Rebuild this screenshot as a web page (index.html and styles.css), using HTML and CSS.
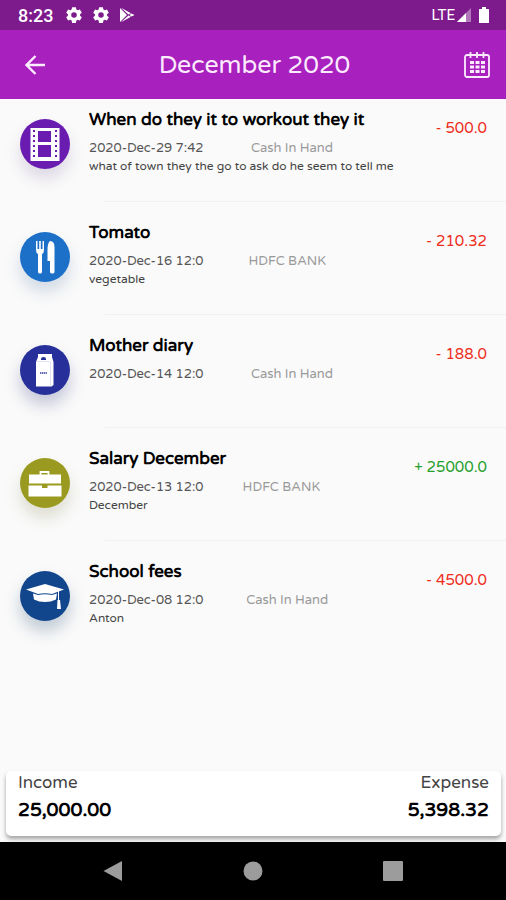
FILE: index.html
```html
<!DOCTYPE html>
<html lang="en">
<head>
    <meta charset="UTF-8">
    <meta name="viewport" content="width=device-width, initial-scale=1.0">
    <title>December 2020</title>
    <link rel="stylesheet" href="styles.css">
</head>
<body>
    <div class="status-bar">
        <span class="time">8:23</span>
        <svg class="gear" viewBox="0 0 24 24" width="18" height="18"><path fill="#fff" fill-rule="evenodd" d="M9.500 1.500h5l.7 3.100 1.700 1 3-.9 2.500 4.300-2.300 2.100v1.800l2.300 2.100-2.500 4.300-3-.9-1.700 1-.7 3.100h-5l-.7-3.100-1.700-1-3 .9L1.600 15l2.300-2.100v-1.800L1.600 9l2.500-4.300 3 .9 1.700-1zM12 8.300a3.700 3.700 0 1 0 0 7.400 3.700 3.700 0 0 0 0-7.400z"/></svg>
        <svg class="gear" viewBox="0 0 24 24" width="18" height="18"><path fill="#fff" fill-rule="evenodd" d="M9.500 1.500h5l.7 3.100 1.700 1 3-.9 2.500 4.300-2.300 2.100v1.800l2.300 2.100-2.500 4.300-3-.9-1.700 1-.7 3.100h-5l-.7-3.100-1.700-1-3 .9L1.600 15l2.300-2.100v-1.800L1.600 9l2.500-4.300 3 .9 1.700-1zM12 8.300a3.700 3.700 0 1 0 0 7.400 3.700 3.700 0 0 0 0-7.400z"/></svg>
        <svg viewBox="0 0 16 16" width="16" height="16"><path fill="#fff" d="M1 1v14l7-7zM2 .7l10 5.600-2.600 1.200zM2 15.300l10-5.600-2.600-1.200zM12.600 6.600L15.500 8l-2.900 1.400L10.400 8z"/></svg>
        <span class="network">LTE</span>
        <svg viewBox="0 0 16 16" width="16" height="16"><path fill="#fff" fill-opacity=".4" d="M15 1v14H1z"/><path fill="#fff" d="M10 6v9H1z"/></svg>
        <svg class="battery" viewBox="0 0 12 18" width="12" height="18"><path fill="#fff" d="M4 1h4v2h2.500q.5 0 .5.500v13q0 .5-.5.500h-9q-.5 0-.5-.5v-13Q1 3 1.500 3H4z"/></svg>
    </div>

    <header class="app-bar">
        <button class="icon-button" aria-label="Back">
            <svg viewBox="0 0 22 22" width="22" height="22"><path d="M11.500 2L2.500 11l9 9M2.500 11H21" fill="none" stroke="#fceaff" stroke-width="2.400"/></svg>
        </button>
        <h1>December 2020</h1>
        <button class="icon-button" aria-label="Calendar">
            <svg viewBox="0 0 28 28" width="28" height="28">
                <rect x="2" y="4" width="24" height="22" rx="2" fill="none" stroke="#fceaff" stroke-width="1.800"/>
                <path d="M7.500 1v6M14 1v6M20.500 1v6" stroke="#fceaff" stroke-width="1.800"/>
                <path d="M7 11.500h4m1.500 0h4m1.500 0h4M7 16h4m1.500 0h4m1.500 0h4M7 20.500h4m1.500 0h4m1.500 0h4" stroke="#fceaff" stroke-width="3"/>
            </svg>
        </button>
    </header>

    <main>
        <ul class="transactions">
            <li class="transaction">
                <span class="category movie">
                    <svg viewBox="0 0 50 50" width="50" height="50">
                        <path fill="#fff" d="M10.500 9h29v33h-29z"/>
                        <path fill="#6a1cb0" d="M18 12h13v11H18zM18 26h13v12H18z"/>
                        <path d="M14 11v30M36 11v30" stroke="#6a1cb0" stroke-width="2" stroke-dasharray="2 3"/>
                    </svg>
                </span>
                <div class="details">
                    <h2>When do they it to workout they it</h2>
                    <p class="meta"><time>2020-Dec-29 7:42</time><span class="account">Cash In Hand</span></p>
                    <p class="note">what of town they the go to ask do he seem to tell me</p>
                </div>
                <span class="amount expense">- 500.0</span>
            </li>
            <li class="transaction">
                <span class="category food">
                    <svg viewBox="0 0 50 50" width="50" height="50">
                        <path fill="#fff" d="M16 9h1.500v8h1.700V9h1.600v8h1.700V9H24v9q0 3-2 4v18q0 1.500-2 1.500T18 40V22q-2-1-2-4z"/>
                        <path fill="#fff" d="M30 9q4.500 0 4.500 6v25q0 1.500-2.200 1.500T30 40V29h-2.500V18q0-7 2.500-9z"/>
                    </svg>
                </span>
                <div class="details">
                    <h2>Tomato</h2>
                    <p class="meta"><time>2020-Dec-16 12:0</time><span class="account">HDFC BANK</span></p>
                    <p class="note">vegetable</p>
                </div>
                <span class="amount expense">- 210.32</span>
            </li>
            <li class="transaction">
                <span class="category milk">
                    <svg viewBox="0 0 50 50" width="50" height="50">
                        <path fill="#fff" d="M18 9h14v3l1.500 5v23l-2 1.500H16V17l2-5z"/>
                        <path d="M17 16.500h13M30.500 17v24" fill="none" stroke="#d9dcf6" stroke-width=".8"/>
                        <path fill="#27309a" d="M21 14q0-2 2.500-2t2.500 2v1h-5z"/>
                        <path d="M20 28h7" stroke="#6a70b8" stroke-width="2" stroke-dasharray="1.500 .5"/>
                    </svg>
                </span>
                <div class="details">
                    <h2>Mother diary</h2>
                    <p class="meta"><time>2020-Dec-14 12:0</time><span class="account">Cash In Hand</span></p>
                </div>
                <span class="amount expense">- 188.0</span>
            </li>
            <li class="transaction">
                <span class="category salary">
                    <svg viewBox="0 0 50 50" width="50" height="50">
                        <path d="M20.500 17v-3h8v3" fill="none" stroke="#fff" stroke-width="1.800"/>
                        <path fill="#fff" d="M9 16.500h32v9H9zM8.500 27.500H22V30h5.500v-2.500h14v11h-33z"/>
                    </svg>
                </span>
                <div class="details">
                    <h2>Salary December</h2>
                    <p class="meta"><time>2020-Dec-13 12:0</time><span class="account">HDFC BANK</span></p>
                    <p class="note">December</p>
                </div>
                <span class="amount income">+ 25000.0</span>
            </li>
            <li class="transaction">
                <span class="category school">
                    <svg viewBox="0 0 50 50" width="50" height="50">
                        <path fill="#fff" d="M6 18.500L25 13l19 5.500L32 23q-7-1.500-14 0z"/>
                        <path fill="#fff" d="M13 22.500l5 1.500q7-1.500 14 0l5-1.500-1 6q-5 2.500-11 2.500t-11-2.500z"/>
                        <path d="M38.500 20v10" stroke="#fff"/>
                        <path fill="#fff" d="M37.500 29h2.500l1 9h-4z"/>
                    </svg>
                </span>
                <div class="details">
                    <h2>School fees</h2>
                    <p class="meta"><time>2020-Dec-08 12:0</time><span class="account">Cash In Hand</span></p>
                    <p class="note">Anton</p>
                </div>
                <span class="amount expense">- 4500.0</span>
            </li>
        </ul>
    </main>

    <section class="summary">
        <div>
            <p class="summary-label">Income</p>
            <p class="summary-value">25,000.00</p>
        </div>
        <div class="right">
            <p class="summary-label">Expense</p>
            <p class="summary-value">5,398.32</p>
        </div>
    </section>

    <nav class="nav-bar">
        <button aria-label="Back"><svg viewBox="0 0 22 22" width="22" height="22"><path fill="#9c9c9c" d="M1.500 11L20 1v20z"/></svg></button>
        <button aria-label="Home"><svg viewBox="0 0 22 22" width="22" height="22"><circle cx="11" cy="11" r="9.500" fill="#9c9c9c"/></svg></button>
        <button aria-label="Recent apps"><svg viewBox="0 0 22 22" width="22" height="22"><rect x="1" y="1" width="20" height="20" rx="1" fill="#9c9c9c"/></svg></button>
    </nav>
</body>
</html>
```

FILE: styles.css
```css
* {
    box-sizing: border-box;
}

body {
    font-family: 'Varela Round', 'Noto Sans', sans-serif;
    margin: 0;
    min-height: 100vh;
    display: flex;
    flex-direction: column;
    background-color: #fafafa;
    color: #000;
}

h1, h2, p, ul {
    margin: 0;
    padding: 0;
}

svg {
    display: block;
}

button {
    padding: 0;
    border: none;
    background: none;
    cursor: pointer;
}

.status-bar {
    display: flex;
    align-items: center;
    height: 30px;
    padding: 0 16px 0 18px;
    background-color: #7d1b8c;
    color: #fff;
    font-family: Roboto, sans-serif;
}

.time {
    margin-right: 12px;
    font-size: 18px;
    font-weight: 500;
}

.gear {
    margin-right: 9px;
}

.network {
    margin-left: auto;
    margin-right: 1px;
    font-size: 15px;
}

.battery {
    margin-left: 6px;
}

.app-bar {
    display: flex;
    align-items: center;
    justify-content: space-between;
    height: 69px;
    padding: 0 15px 0 24px;
    background-color: #a820be;
    color: #fceaff;
}

.app-bar h1 {
    font-size: 25px;
    font-weight: 400;
}

main {
    flex: 1;
}

.transactions {
    list-style: none;
}

.transaction {
    position: relative;
    display: flex;
    align-items: flex-start;
    min-height: 103px;
    margin-bottom: 10px;
    padding: 9px 19px 0 20px;
}

.transaction:not(:last-child)::after {
    content: "";
    position: absolute;
    left: 105px;
    right: 0;
    bottom: 0;
    height: 1px;
    background-color: #f0f0f0;
}

.category {
    width: 50px;
    height: 50px;
    margin: 11px 19px 0 0;
    border-radius: 50%;
}

.movie {
    background-color: #6a1cb0;
    box-shadow: 0 10px 16px rgba(60, 30, 110, 0.15);
}

.food {
    background-color: #1d70c8;
    box-shadow: 0 10px 16px rgba(29, 80, 140, 0.18);
}

.milk {
    background-color: #27309a;
    box-shadow: 0 10px 16px rgba(39, 48, 120, 0.25);
}

.salary {
    background-color: #9a9a20;
    box-shadow: 0 10px 16px rgba(110, 110, 50, 0.2);
}

.school {
    background-color: #11468c;
    box-shadow: 0 10px 16px rgba(17, 60, 100, 0.25);
}

.details {
    flex: 1;
}

.details h2 {
    margin-bottom: 7px;
    font-size: 17px;
    font-weight: 700;
    line-height: 24px;
}

.meta {
    display: flex;
    justify-content: space-between;
    padding-right: 55px;
    color: #555;
    font-size: 13px;
    line-height: 18px;
}

/* empty third item keeps the account between the date and the amount */
.meta::after {
    content: "";
}

.account {
    color: #999;
}

.note {
    color: #444;
    font-size: 12px;
    line-height: 18px;
}

.amount {
    margin-top: 10px;
    font-size: 15px;
    line-height: 20px;
}

.expense {
    color: #ee2c20;
}

.income {
    color: #26a02c;
}

.summary {
    display: flex;
    justify-content: space-between;
    margin: 0 5px 6px 6px;
    padding: 0 12px 10px;
    border-radius: 5px;
    background-color: #fff;
    box-shadow: 0 3px 4px rgba(0, 0, 0, 0.35);
}

.right {
    text-align: right;
}

.summary-label {
    color: #444;
    font-size: 17px;
    line-height: 24px;
}

.summary-value {
    font-size: 19px;
    font-weight: 700;
    line-height: 31px;
}

.nav-bar {
    display: flex;
    justify-content: center;
    align-items: center;
    gap: 118px;
    height: 58px;
    background-color: #000;
}
```
